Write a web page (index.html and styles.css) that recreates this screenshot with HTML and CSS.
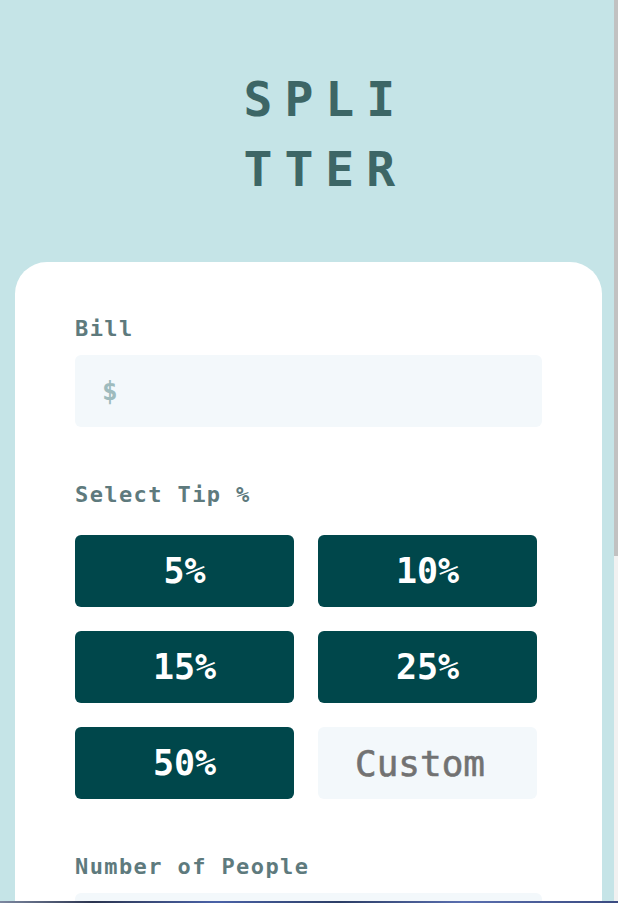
FILE: index.html
```html
<!DOCTYPE html>
<html lang="en">
<head>
<meta charset="utf-8">
<title>Splitter</title>
<link rel="stylesheet" href="styles.css">
</head>
<body>
<main class="page">
  <h1 class="logo">SPLITTER</h1>
  <section class="card">
    <div class="field">
      <label class="label" for="bill">Bill</label>
      <div class="input-box">
        <span class="input-icon">$</span>
        <input id="bill" class="input" type="text">
      </div>
    </div>
    <div class="field">
      <span class="label">Select Tip %</span>
      <div class="tips">
        <button class="tip">5%</button>
        <button class="tip">10%</button>
        <button class="tip">15%</button>
        <button class="tip">25%</button>
        <button class="tip">50%</button>
        <input class="tip custom" type="text" placeholder="Custom">
      </div>
    </div>
    <div class="field">
      <label class="label" for="people">Number of People</label>
      <div class="input-box">
        <svg class="person" width="14" height="16" viewBox="0 0 13 16"><path fill="#9ebbbd" d="M6.5 0a4 4 0 1 1 0 8 4 4 0 0 1 0-8zM3 9h7a3 3 0 0 1 3 3v4H0v-4a3 3 0 0 1 3-3z"/></svg>
        <input id="people" class="input" type="text">
      </div>
    </div>
    <div class="result">
      <div class="result-row">
        <div class="result-name">Tip Amount<span>/ person</span></div>
        <div class="result-value">$0.00</div>
      </div>
      <div class="result-row">
        <div class="result-name">Total<span>/ person</span></div>
        <div class="result-value">$0.00</div>
      </div>
      <button class="reset">RESET</button>
    </div>
  </section>
</main>
<div class="scrollbar"><div class="scroll-thumb"></div></div>
<div class="bottom-line"></div>
</body>
</html>
```

FILE: styles.css
```css
html { background: #c5e4e7; }

body {
  margin: 0;
  background: #c5e4e7;
  font-family: "DejaVu Sans Mono", monospace;
}

.page {
  display: flex;
  flex-direction: column;
  align-items: center;
  padding-top: 64px;
  padding-right: 4px;
}

.logo {
  margin: 0 0 58px 0;
  padding-left: 39px;
  width: 166px;
  font-size: 48px;
  line-height: 70px;
  font-weight: bold;
  letter-spacing: 12px;
  color: #3d6666;
  word-break: break-all;
}

.card {
  align-self: flex-start;
  margin-left: 15px;
  width: 587px;
  box-sizing: border-box;
  background: #fff;
  border-radius: 32px 32px 0 0;
  padding: 55px 60px 120px 60px;
  display: flex;
  flex-direction: column;
  gap: 56px;
}

.field {
  display: flex;
  flex-direction: column;
  gap: 14px;
}

.label {
  font-size: 22px;
  line-height: 24px;
  font-weight: bold;
  letter-spacing: 1.4px;
  color: #5e7a7d;
}

.input-box {
  height: 72px;
  background: #f3f8fb;
  border-radius: 6px;
  display: flex;
  align-items: center;
  padding-left: 27px;
}

.input-icon {
  font-size: 26px;
  font-weight: bold;
  color: #9ebbbd;
}

.person { flex: none; }

.input {
  flex: 1;
  border: none;
  background: transparent;
  outline: none;
  font-family: inherit;
  font-size: 30px;
  color: #00474b;
  text-align: right;
  padding-right: 20px;
  min-width: 0;
}

.tips {
  display: grid;
  grid-template-columns: 1fr 1fr;
  gap: 24px;
  padding-right: 5px;
  margin-top: 14px;
}

.tip {
  height: 72px;
  border: none;
  border-radius: 6px;
  background: #00474b;
  color: #fff;
  font-family: "DejaVu Sans Mono", monospace;
  font-size: 35px;
  font-weight: bold;
  padding: 0;
}

.custom {
  background: #f3f8fb;
  color: #00474b;
  text-align: left;
  padding-left: 37px;
  font-weight: normal;
  font-size: 36px;
  outline: none;
  min-width: 0;
  box-sizing: border-box;
  width: 100%;
  -webkit-text-stroke: 0.6px #727272;
}
.custom::placeholder { color: #727272; }

.result {
  background: #00474b;
  border-radius: 16px;
  padding: 40px 24px 24px;
  display: flex;
  flex-direction: column;
  gap: 30px;
}

.result-row {
  display: flex;
  justify-content: space-between;
  align-items: center;
}

.result-name {
  color: #fff;
  font-weight: bold;
  font-size: 16px;
  display: flex;
  flex-direction: column;
}
.result-name span { color: #7f9d9f; font-size: 13px; }

.result-value {
  color: #26c2ae;
  font-weight: bold;
  font-size: 32px;
}

.reset {
  height: 48px;
  border: none;
  border-radius: 5px;
  background: #26c2ae;
  color: #00474b;
  font-family: inherit;
  font-weight: bold;
  font-size: 20px;
}

.scrollbar {
  position: fixed;
  top: 0;
  right: 0;
  bottom: 0;
  width: 4px;
  background: #f1f1f1;
}

.scroll-thumb {
  height: 556px;
  background: #c1c1c1;
}

.bottom-line {
  position: fixed;
  left: 0;
  right: 0;
  bottom: 0;
  height: 2px;
  background: linear-gradient(90deg, #7d88a0 0%, #2b3550 15%, #4a62a8 35%, #2c3e66 55%, #5a6fb0 75%, #3a4a80 100%);
}
```
